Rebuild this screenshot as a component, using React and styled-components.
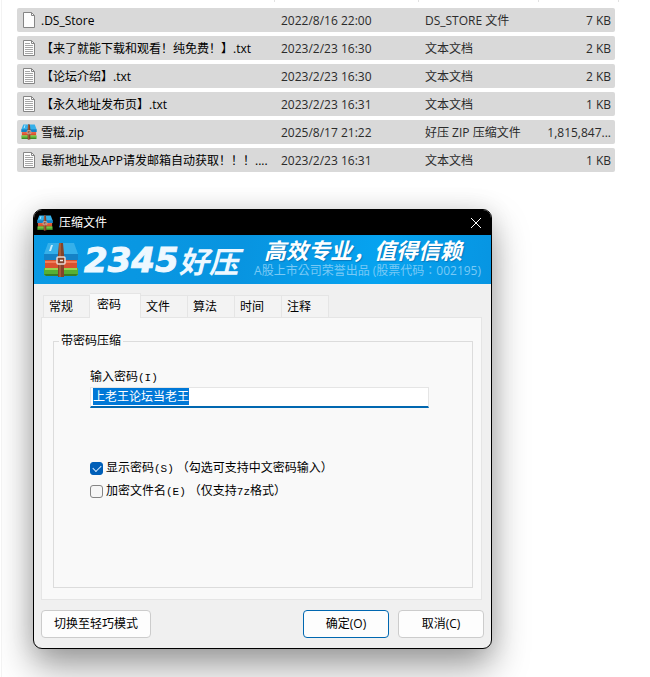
import React, { useEffect, useRef, useState } from "react";
import styled, { createGlobalStyle } from "styled-components";

const GlobalStyle = createGlobalStyle`
  * {
    box-sizing: border-box;
  }
  body {
    margin: 0;
    background: #ffffff;
    color: #000000;
    font-family: "Open Sans", "Noto Sans CJK SC", sans-serif;
    font-size: 12px;
    line-height: 16px;
    text-spacing-trim: space-all;
  }
  button, input {
    font: inherit;
    color: inherit;
  }
`;

const Page = styled.main`
  min-height: 100vh;
  overflow: hidden;
  margin-left: 1px;
  padding: 0 35px 28px 15px;
  border-left: 1px solid #f3f3f3;
`;

const ColumnLines = styled.div`
  display: grid;
  grid-template-columns: 1fr 144px 120px 80px;
  height: 2px;
  margin-right: -4px;

  span {
    border-right: 1px solid #e2e2e2;
  }
`;

const FileTable = styled.table`
  width: 100%;
  table-layout: fixed;
  border-collapse: separate;
  border-spacing: 0 4px;
  margin-top: 2px;
`;

const FileRow = styled.tr`
  height: 24px;
`;

const Cell = styled.td`
  width: ${props => props.$width || "auto"};
  padding: 2px 4px 0 7px;
  color: ${props => props.$name ? "#000000" : "#2b2b2b"};
  text-align: ${props => props.$right ? "right" : "left"};
  white-space: nowrap;
  background: #d9d9d9;

  &:first-child {
    padding: 0 0 0 4px;
    border-radius: 2px 0 0 2px;
  }
  &:last-child {
    border-radius: 0 2px 2px 0;
  }
`;

const FileName = styled.div`
  display: flex;
  align-items: center;
  gap: 4px;

  span {
    padding-top: 2px;
  }
`;

const Dialog = styled.section`
  width: 100%;
  max-width: 459px;
  margin: 33px 0 0 16px;
  overflow: hidden;
  background: #f0f0f0;
  border: 1px solid #000000;
  border-radius: 9px;
  box-shadow: 0 18px 36px rgba(0, 0, 0, 0.38), 0 0 24px rgba(0, 0, 0, 0.1);
`;

const TitleBar = styled.header`
  display: flex;
  align-items: center;
  height: 25px;
  padding: 0 9px 0 3px;
  gap: 6px;
  color: #ffffff;
  background: #000000;

  h1 {
    flex: 1;
    margin: 0;
    font-size: 12px;
    font-weight: 400;
  }
`;

const CloseButton = styled.button`
  display: flex;
  padding: 0;
  border: 0;
  background: none;
`;

const Banner = styled.div`
  display: flex;
  align-items: center;
  height: 49px;
  padding: 0 10px 0 9px;
  background: linear-gradient(100deg, #0a9ae4 0%, #0894e0 45%, #06a3f0 75%, #0795e2 100%);
`;

const Brand = styled.div`
  display: flex;
  align-items: center;
  margin-left: 5px;
  color: #eef8ff;
  font-family: "DejaVu Sans", "Noto Sans CJK SC", sans-serif;
  font-size: 34px;
  font-style: italic;
  font-weight: 700;
  line-height: 40px;
  white-space: nowrap;
  -webkit-text-stroke: 1px #eef8ff;

  span {
    font-family: "Noto Sans CJK SC", sans-serif;
    font-size: 30px;
    line-height: 38px;
    -webkit-text-stroke: 0;
  }
`;

const Slogan = styled.div`
  flex: 1;
  text-align: right;
  white-space: nowrap;

  strong {
    display: block;
    padding-right: 19px;
    color: #ffffff;
    font-family: "Noto Sans CJK SC", sans-serif;
    font-size: 22px;
    font-style: italic;
    line-height: 22px;
    text-shadow: 1px 1px 1px #0878bd;
  }
  small {
    display: block;
    color: #79c9f5;
    font-family: "Open Sans", "Noto Sans CJK TC", sans-serif;
    font-size: 12px;
    line-height: 22px;
  }
`;

const DialogBody = styled.div`
  padding: 9px 9px 10px 7px;
`;

const Tabs = styled.div`
  display: flex;
  align-items: flex-end;
  padding-left: 2px;
`;

const Tab = styled.button`
  width: ${props => props.$active ? "51px" : "47px"};
  height: ${props => props.$active ? "25px" : "22px"};
  margin-bottom: ${props => props.$active ? "-1px" : "0"};
  padding: ${props => props.$active ? "0 8px 2px 7px" : "0 8px 0 5px"};
  text-align: left;
  background: ${props => props.$active ? "#f9f9f9" : "#f3f3f3"};
  border: 1px solid #e5e5e5;
  border-left-width: ${props => props.$first ? "1px" : "0"};
  border-bottom: 0;
`;

const Panel = styled.div`
  padding: 16px 8px 11px 11px;
  background: #f9f9f9;
  border: 1px solid #e5e5e5;
`;

const Group = styled.fieldset`
  min-width: 0;
  min-height: 254px;
  margin: 0;
  padding: 21px 43px 0 36px;
  border: 1px solid #dcdcdc;

  legend {
    margin-left: -31px;
    padding: 0 2px;
    line-height: 14px;
  }
`;

const FieldLabel = styled.label`
  display: block;
  margin-bottom: 2px;
`;

const Mono = styled.span`
  font-family: "Liberation Mono", monospace;
  font-size: 11px;
  line-height: 1;
`;

const PasswordInput = styled.input`
  display: block;
  width: 100%;
  height: 21px;
  padding: 0 2px 2px;
  line-height: 13px;
  background: #ffffff;
  border: 1px solid #e5e5e5;
  border-bottom: 2px solid #0067b0;
  border-radius: 0;
  outline: none;

  &::selection {
    color: #ffffff;
    background: #0078d7;
  }
`;

const Options = styled.div`
  display: grid;
  gap: 7px;
  margin-top: 52px;
`;

const Option = styled.label`
  display: flex;
  align-items: center;
  gap: 3px;
  height: 16px;
  white-space: nowrap;
`;

const CheckBox = styled.input`
  appearance: none;
  display: grid;
  place-items: center;
  flex: none;
  width: 13px;
  height: 13px;
  margin: 0;
  background: #f6f6f6;
  border: 1px solid #858585;
  border-radius: 3px;

  &:checked {
    background: #005fb8;
    border-color: #005fb8;
  }
  &:checked::after {
    content: "";
    width: 7px;
    height: 4px;
    margin-bottom: 2px;
    border: solid #d8eaff;
    border-width: 0 0 1px 1px;
    transform: rotate(-45deg);
  }
`;

const Actions = styled.footer`
  display: flex;
  gap: 9px;
  padding-top: 10px;
`;

const PushButton = styled.button`
  width: ${props => props.$wide ? "110px" : "86px"};
  height: 28px;
  margin-right: ${props => props.$wide ? "auto" : "0"};
  padding: 0;
  background: #fdfdfd;
  border: 1px solid ${props => props.$primary ? "#0067b0" : "#cccccc"};
  border-radius: 4px;

  &:last-child {
    margin-right: -2px;
  }
`;

function PageIcon({ lines }) {
  return (
    <svg width="16" height="18" viewBox="0 0 16 18" aria-hidden="true">
      <path d="M2.5 1.5h8l3 3v12h-11z" fill="#fdfdfd" stroke="#858585" />
      <path d="M10.5 1.5v3h3" fill="none" stroke="#858585" />
      {lines && <path d="M4 4.5h5M4 6.5h8M4 8.5h8M4 10.5h8M4 12.5h8M4 14.5h8" stroke="#a6a6a6" />}
    </svg>
  );
}

function ArchiveIcon({ size }) {
  return (
    <svg width={size} height={size} viewBox="0 0 36 36" aria-hidden="true">
      <path d="M5 1h26l4 11v6H1v-6z" fill="#35b0ea" />
      <path d="M1 12h34v6H1z" fill="#1582c6" />
      <path d="M8 3h2L8 9H6z" fill="#c3ecfc" />
      <path d="M2 18h32v8H2z" fill="#d9512f" />
      <path d="M2 19h32v2H2z" fill="#f07c58" />
      <path d="M1 26h34v7l-2 1H3l-2-1z" fill="#57b035" />
      <path d="M2 26h32v2H2z" fill="#96d44f" />
      <path d="M1 32h34l-2 2H3z" fill="#397e25" />
      <path d="M16 1h4l1 11v23h-6V12z" fill="#84432a" />
      <path d="M16 1h2v34h-2z" fill="#a55c38" />
      <rect x="14" y="15" width="8" height="7" rx="1" fill="#84432a" stroke="#e9dcd6" strokeWidth="1.5" />
      <path d="M17 18.5h3" stroke="#f4eeea" strokeWidth="1.5" />
    </svg>
  );
}

const files = [
  { name: ".DS_Store", date: "2022/8/16 22:00", type: "DS_STORE 文件", size: "7 KB", icon: "blank" },
  { name: "【来了就能下载和观看！纯免费！】.txt", date: "2023/2/23 16:30", type: "文本文档", size: "2 KB", icon: "text" },
  { name: "【论坛介绍】.txt", date: "2023/2/23 16:30", type: "文本文档", size: "2 KB", icon: "text" },
  { name: "【永久地址发布页】.txt", date: "2023/2/23 16:31", type: "文本文档", size: "1 KB", icon: "text" },
  { name: "雪糍.zip", date: "2025/8/17 21:22", type: "好压 ZIP 压缩文件", size: "1,815,847...", icon: "zip" },
  { name: "最新地址及APP请发邮箱自动获取！！！....", date: "2023/2/23 16:31", type: "文本文档", size: "1 KB", icon: "text" }
];

const tabs = ["常规", "密码", "文件", "算法", "时间", "注释"];

function FileList() {
  return (
    <>
      <ColumnLines><span /><span /><span /><span /></ColumnLines>
      <FileTable>
        <tbody>
          {files.map(file => (
            <FileRow key={file.name}>
              <Cell $name>
                <FileName>
                  {file.icon === "zip" ? <ArchiveIcon size={16} /> : <PageIcon lines={file.icon === "text"} />}
                  <span>{file.name}</span>
                </FileName>
              </Cell>
              <Cell $width="144px">{file.date}</Cell>
              <Cell $width="120px">{file.type}</Cell>
              <Cell $width="77px" $right>{file.size}</Cell>
            </FileRow>
          ))}
        </tbody>
      </FileTable>
    </>
  );
}

function PasswordForm() {
  const input = useRef(null);
  const [visible, setVisible] = useState(true);

  useEffect(() => {
    input.current.focus();
    input.current.select();
  }, []);

  return (
    <Group>
      <legend>带密码压缩</legend>
      <FieldLabel htmlFor="password">输入密码<Mono>(I)</Mono></FieldLabel>
      <PasswordInput
        id="password"
        ref={input}
        type={visible ? "text" : "password"}
        defaultValue="上老王论坛当老王"
      />
      <Options>
        <Option>
          <CheckBox type="checkbox" checked={visible} onChange={e => setVisible(e.target.checked)} />
          <span>显示密码<Mono>(S)</Mono></span>
          <span>（勾选可支持中文密码输入）</span>
        </Option>
        <Option>
          <CheckBox type="checkbox" />
          <span>加密文件名<Mono>(E)</Mono></span>
          <span>（仅支持<Mono>7z</Mono>格式）</span>
        </Option>
      </Options>
    </Group>
  );
}

function App() {
  const [active, setActive] = useState("密码");

  return (
    <Page>
      <GlobalStyle />
      <FileList />
      <Dialog role="dialog" aria-labelledby="dialogTitle">
        <TitleBar>
          <ArchiveIcon size={16} />
          <h1 id="dialogTitle">压缩文件</h1>
          <CloseButton type="button" aria-label="关闭">
            <svg width="12" height="12" viewBox="0 0 12 12">
              <path d="M1 1l10 10M11 1L1 11" stroke="#fff" />
            </svg>
          </CloseButton>
        </TitleBar>
        <Banner>
          <ArchiveIcon size={36} />
          <Brand>2345<span>好压</span></Brand>
          <Slogan>
            <strong>高效专业，值得信赖</strong>
            <small>A股上市公司荣誉出品 (股票代码：002195)</small>
          </Slogan>
        </Banner>
        <DialogBody>
          <Tabs role="tablist">
            {tabs.map((tab, i) => (
              <Tab
                key={tab}
                type="button"
                role="tab"
                aria-selected={tab === active}
                $active={tab === active}
                $first={i === 0}
                onClick={() => setActive(tab)}
              >
                {tab}
              </Tab>
            ))}
          </Tabs>
          <Panel role="tabpanel">
            <PasswordForm />
          </Panel>
          <Actions>
            <PushButton type="button" $wide>切换至轻巧模式</PushButton>
            <PushButton type="button" $primary>确定(O)</PushButton>
            <PushButton type="button">取消(C)</PushButton>
          </Actions>
        </DialogBody>
      </Dialog>
    </Page>
  );
}

export default App;
